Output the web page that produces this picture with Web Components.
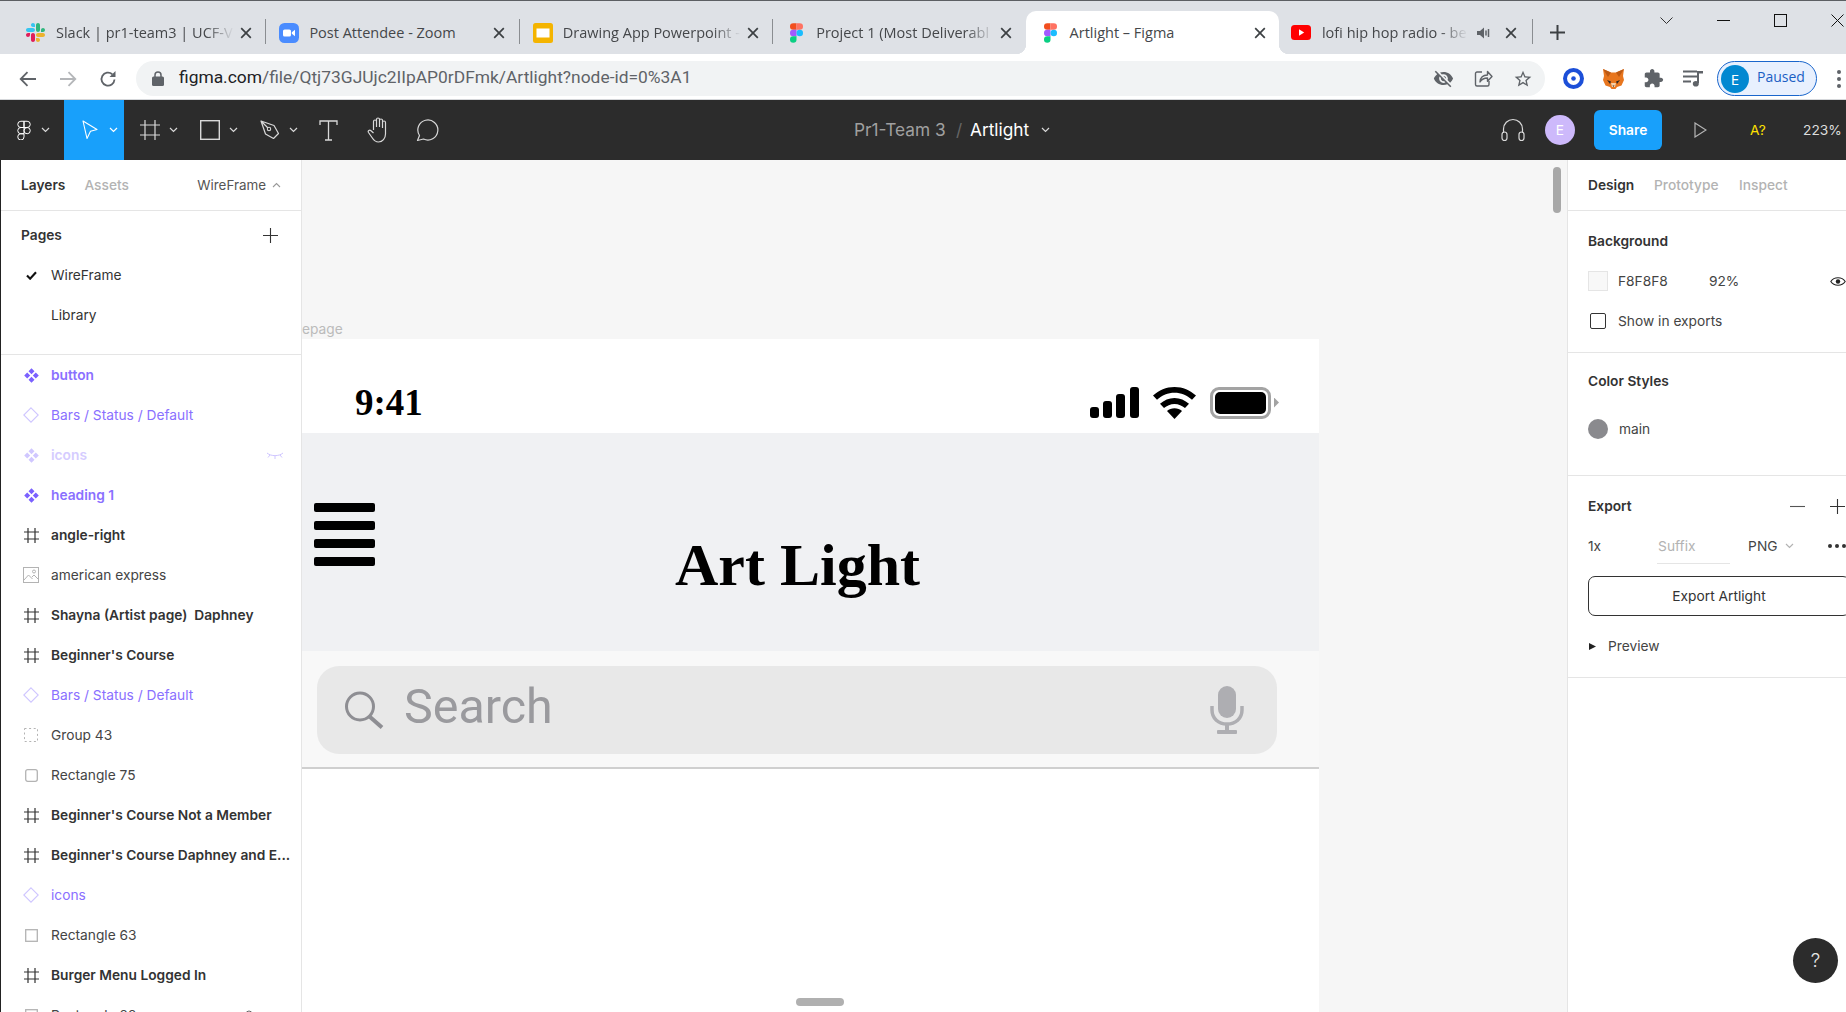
<!DOCTYPE html>
<html>
<head>
<meta charset="utf-8">
<title>Artlight – Figma</title>
<style>
html, body { margin: 0; height: 100%; overflow: hidden; background: #fff; }
body { display: flex; flex-direction: column; width: 1846px; height: 1012px; font-family: Inter, "Liberation Sans", sans-serif; }
.main { display: flex; height: 852px; overflow: hidden; }
</style>
</head>
<body>
<chrome-tabstrip>
    <chrome-tab icon="slack" label="Slack | pr1-team3 | UCF-VI" fade></chrome-tab>
    <chrome-tab icon="zoom" label="Post Attendee - Zoom"></chrome-tab>
    <chrome-tab icon="slides" label="Drawing App Powerpoint -" fade></chrome-tab>
    <chrome-tab icon="figma" label="Project 1 (Most Deliverabl" fade noline></chrome-tab>
    <chrome-tab icon="figma" label="Artlight – Figma" active noline></chrome-tab>
    <chrome-tab icon="youtube" label="lofi hip hop radio - be" fade audio></chrome-tab>
</chrome-tabstrip>
<chrome-toolbar></chrome-toolbar>
<figma-toolbar></figma-toolbar>
<div class="main">
    <layers-panel>
        <layer-row kind="comp" label="button" tone="purple" strong></layer-row>
        <layer-row kind="inst" label="Bars / Status / Default" tone="purple"></layer-row>
        <layer-row kind="comp" label="icons" tone="purple" strong hidden-layer></layer-row>
        <layer-row kind="comp" label="heading 1" tone="purple" strong></layer-row>
        <layer-row kind="frame" label="angle-right" strong></layer-row>
        <layer-row kind="image" label="american express"></layer-row>
        <layer-row kind="frame" label="Shayna (Artist page)&nbsp; Daphney" strong></layer-row>
        <layer-row kind="frame" label="Beginner's Course" strong></layer-row>
        <layer-row kind="inst" label="Bars / Status / Default" tone="purple"></layer-row>
        <layer-row kind="group" label="Group 43"></layer-row>
        <layer-row kind="rrect" label="Rectangle 75"></layer-row>
        <layer-row kind="frame" label="Beginner's Course Not a Member" strong></layer-row>
        <layer-row kind="frame" label="Beginner's Course Daphney and E..." strong></layer-row>
        <layer-row kind="inst" label="icons" tone="purple"></layer-row>
        <layer-row kind="rect" label="Rectangle 63"></layer-row>
        <layer-row kind="frame" label="Burger Menu Logged In" strong></layer-row>
        <layer-row kind="rect" label="Rectangle 22" locked></layer-row>
    </layers-panel>
    <canvas-view>
        <art-frame></art-frame>
    </canvas-view>
    <design-panel></design-panel>
</div>
<script>
const FIGMA_PATHS = 'M6 1H3.5a2.5 2.5 0 000 5H6zM6 1h2.5a2.5 2.5 0 010 5H6zM6 6H3.5a2.5 2.5 0 000 5H6zM6 11H3.5A2.5 2.5 0 106 13.5zM11 8.5a2.5 2.5 0 11-5 0 2.5 2.5 0 015 0z'

/* Every icon of the page, drawn inline */
const ICONS = {
    slack: `<svg width="19" height="19" viewBox="0 0 122.8 122.8"><path fill="#e01e5a" d="M25.8 77.6c0 7.1-5.8 12.9-12.9 12.9S0 84.7 0 77.6s5.8-12.9 12.9-12.9h12.9v12.9zM32.3 77.6c0-7.1 5.8-12.9 12.9-12.9s12.9 5.8 12.9 12.9v32.3c0 7.1-5.8 12.9-12.9 12.9s-12.9-5.8-12.9-12.9V77.6z"/><path fill="#36c5f0" d="M45.2 25.8c-7.1 0-12.9-5.8-12.9-12.9S38.1 0 45.2 0s12.9 5.8 12.9 12.9v12.9H45.2zM45.2 32.3c7.1 0 12.9 5.8 12.9 12.9s-5.8 12.9-12.9 12.9H12.9C5.8 58.1 0 52.3 0 45.2s5.8-12.9 12.9-12.9h32.3z"/><path fill="#2eb67d" d="M97 45.2c0-7.1 5.8-12.9 12.9-12.9s12.9 5.8 12.9 12.9-5.8 12.9-12.9 12.9H97V45.2zM90.5 45.2c0 7.1-5.8 12.9-12.9 12.9s-12.9-5.8-12.9-12.9V12.9C64.7 5.8 70.5 0 77.6 0s12.9 5.8 12.9 12.9v32.3z"/><path fill="#ecb22e" d="M77.6 97c7.1 0 12.9 5.8 12.9 12.9s-5.8 12.9-12.9 12.9-12.9-5.8-12.9-12.9V97h12.9zM77.6 90.5c-7.1 0-12.9-5.8-12.9-12.9s5.8-12.9 12.9-12.9h32.3c7.1 0 12.9 5.8 12.9 12.9s-5.8 12.9-12.9 12.9H77.6z"/></svg>`,
    zoom: `<svg width="20" height="20" viewBox="0 0 20 20"><rect width="20" height="20" rx="5.5" fill="#4a8cff"/><rect x="4" y="6.5" width="8" height="7" rx="1.6" fill="#fff"/><path d="M12.8 9.2l3.2-2.4v6.4l-3.2-2.4z" fill="#fff"/></svg>`,
    slides: `<svg width="20" height="20" viewBox="0 0 20 20"><rect width="20" height="20" rx="2.5" fill="#f4b400"/><rect x="3.5" y="5.5" width="13" height="9" fill="#fff"/></svg>`,
    figma: `<svg width="13" height="20" viewBox="0 0 12 18"><path fill="#f24e1e" d="M0 3a3 3 0 013-3h3v6H3a3 3 0 01-3-3z"/><path fill="#ff7262" d="M6 0h3a3 3 0 010 6H6z"/><path fill="#a259ff" d="M0 9a3 3 0 013-3h3v6H3a3 3 0 01-3-3z"/><circle cx="9" cy="9" r="3" fill="#1abcfe"/><path fill="#0acf83" d="M0 15a3 3 0 013-3h3v3a3 3 0 01-6 0z"/></svg>`,
    youtube: `<svg width="20" height="15" viewBox="0 0 20 15"><rect width="20" height="15" rx="3.5" fill="#f00"/><path d="M8 4.2l5.2 3.3L8 10.8z" fill="#fff"/></svg>`,
    close: `<svg width="12" height="12" viewBox="0 0 12 12"><path d="M1.2 1.2l9.6 9.6M10.8 1.2l-9.6 9.6" stroke="#3c4043" stroke-width="1.7" fill="none"/></svg>`,
    speaker: `<svg width="14" height="12" viewBox="0 0 14 12"><path d="M0 4h3l4-3.5v11L3 8H0z" fill="#5f6368"/><path d="M9 3.5v5M11.5 2v8" stroke="#5f6368" stroke-width="1.5"/></svg>`,
    back: `<svg width="18" height="16" viewBox="0 0 18 16"><path d="M17 8H2M8.5 1.2L1.7 8l6.8 6.8" stroke="#5f6368" stroke-width="1.8" fill="none"/></svg>`,
    forward: `<svg width="18" height="16" viewBox="0 0 18 16"><path d="M1 8h15M9.5 1.2L16.3 8l-6.8 6.8" stroke="#b4b6b9" stroke-width="1.8" fill="none"/></svg>`,
    reload: `<svg width="18" height="18" viewBox="0 0 18 18"><path d="M15.5 9.5A6.5 6.5 0 1113.3 4.2" stroke="#5f6368" stroke-width="1.8" fill="none"/><path d="M16.5 1v6h-6z" fill="#5f6368"/></svg>`,
    lock: `<svg width="12" height="15" viewBox="0 0 12 15"><path d="M3 6V4a3 3 0 016 0v2" stroke="#5f6368" stroke-width="1.5" fill="none"/><rect y="5.5" width="12" height="9.5" rx="1.5" fill="#5f6368"/></svg>`,
    eyeOff: `<svg width="21" height="21" viewBox="0 0 24 24"><path fill="#5f6368" d="M12 7c2.76 0 5 2.24 5 5 0 .65-.13 1.26-.36 1.83l2.92 2.92c1.51-1.26 2.7-2.89 3.43-4.75-1.73-4.39-6-7.5-11-7.5-1.4 0-2.74.25-3.98.7l2.16 2.16C10.74 7.13 11.35 7 12 7zM2 4.27l2.28 2.28.46.46C3.08 8.3 1.78 10.02 1 12c1.73 4.39 6 7.5 11 7.5 1.55 0 3.03-.3 4.38-.84l.42.42L19.73 22 21 20.73 3.27 3 2 4.27zM7.53 9.8l1.55 1.55c-.05.21-.08.43-.08.65 0 1.66 1.34 3 3 3 .22 0 .44-.03.65-.08l1.55 1.55c-.67.33-1.41.53-2.2.53-2.76 0-5-2.24-5-5 0-.79.2-1.53.53-2.2zm4.31-.78l3.15 3.15.02-.16c0-1.66-1.34-3-3-3l-.17.01z"/></svg>`,
    share: `<svg width="19" height="19" viewBox="0 0 19 19"><path d="M8 3H3a1.5 1.5 0 00-1.5 1.5v11A1.5 1.5 0 003 17h10.5a1.5 1.5 0 001.5-1.5V12" stroke="#5f6368" stroke-width="1.4" fill="none"/><path d="M6 13c.4-4.5 3.5-7 7.5-7V2.5L18 7.5l-4.5 4.8V9c-3 0-5.8 1.2-7.5 4z" stroke="#5f6368" stroke-width="1.4" fill="none" stroke-linejoin="round"/></svg>`,
    star: `<svg width="20" height="20" viewBox="0 0 24 24"><path fill="#5f6368" d="M22 9.24l-7.19-.62L12 2 9.19 8.63 2 9.24l5.46 4.73L5.82 21 12 17.27 18.18 21l-1.63-7.03L22 9.24zM12 15.4l-3.76 2.27 1-4.28-3.32-2.88 4.38-.38L12 6.1l1.71 4.04 4.38.38-3.32 2.88 1 4.28L12 15.4z"/></svg>`,
    ring: `<svg width="21" height="21" viewBox="0 0 21 21"><circle cx="10.5" cy="10.5" r="10.5" fill="#1c4fd8"/><circle cx="10.5" cy="10.5" r="6.5" fill="#fff"/><circle cx="10.5" cy="10.5" r="2.3" fill="#1c4fd8"/></svg>`,
    fox: `<svg width="21" height="20" viewBox="0 0 21 20"><path d="M0 0l8 3.5h5L21 0l-1 7 1 4-2.5 5.5L14 18l-1.5 2h-4L7 18l-4.5-1.5L0 11l1-4z" fill="#e8761e"/><path d="M4 11l4 1.5L7 15zM17 11l-4 1.5 1 2.5z" fill="#2f2a26"/><path d="M8 14h5l-1 4H9z" fill="#f6d0a8"/><path d="M9.5 16.5h2L10.5 18z" fill="#2f2a26"/><path d="M0 0l8 3.5L5 8zM21 0l-8 3.5L16 8z" fill="#bd5a14"/></svg>`,
    puzzle: `<svg width="21" height="21" viewBox="0 0 24 24"><path fill="#5f6368" d="M20.5 11H19V7c0-1.1-.9-2-2-2h-4V3.5C13 2.12 11.88 1 10.5 1S8 2.12 8 3.5V5H4c-1.1 0-1.99.9-1.99 2v3.8H3.5c1.49 0 2.7 1.21 2.7 2.7s-1.21 2.7-2.7 2.7H2V20c0 1.1.9 2 2 2h3.8v-1.5c0-1.49 1.21-2.7 2.7-2.7 1.49 0 2.7 1.21 2.7 2.7V22H17c1.1 0 2-.9 2-2v-4h1.5c1.38 0 2.5-1.12 2.5-2.5S21.88 11 20.5 11z"/></svg>`,
    queue: `<svg width="20" height="17" viewBox="0 0 20 17"><path d="M0 1.5h14M0 6.5h14M0 11.5h8" stroke="#5f6368" stroke-width="1.8"/><path d="M15 1v12" stroke="#5f6368" stroke-width="2"/><path d="M15.5 1H20v2.5h-4.5z" fill="#5f6368"/><ellipse cx="12.8" cy="13.8" rx="3" ry="2.8" fill="#5f6368"/></svg>`,
    kebab: `<svg width="4" height="18" viewBox="0 0 4 18"><circle cx="2" cy="2" r="2" fill="#5f6368"/><circle cx="2" cy="9" r="2" fill="#5f6368"/><circle cx="2" cy="16" r="2" fill="#5f6368"/></svg>`,
    figmaMono: `<svg width="16" height="20" viewBox="0 0 12 16"><path d="${FIGMA_PATHS}" stroke="#fff" stroke-width=".8" fill="none"/></svg>`,
    move: `<svg width="16" height="20" viewBox="0 0 16 20"><path d="M1 1l14 8.5-6.5 1.8L5 18.5z" stroke="#fff" stroke-width="1.1" fill="none" stroke-linejoin="round"/></svg>`,
    frame: `<svg width="20" height="20" viewBox="0 0 20 20"><path d="M5 0v20M15 0v20M0 5h20M0 15h20" stroke="#d9d9d9" stroke-width="1.2" fill="none"/></svg>`,
    rect: `<svg width="20" height="20" viewBox="0 0 20 20"><rect x=".7" y=".7" width="18.6" height="18.6" stroke="#d9d9d9" stroke-width="1.4" fill="none"/></svg>`,
    pen: `<svg width="20" height="20" viewBox="0 0 20 20"><path d="M1 1l13 4.5 4.5 8-5 5-8-4.5zM1 1l7 7" stroke="#d9d9d9" stroke-width="1.2" fill="none" stroke-linejoin="round"/><circle cx="9" cy="9" r="1.7" stroke="#d9d9d9" stroke-width="1.1" fill="none"/></svg>`,
    type: `<svg width="19" height="21" viewBox="0 0 19 21"><path d="M1 5V1h17v4M9.5 1v19M6 20h7" stroke="#d9d9d9" stroke-width="1.3" fill="none"/></svg>`,
    hand: `<svg width="23" height="26" viewBox="0 0 23 26"><path d="M6.5 13V4.5a1.5 1.5 0 013 0V10M9.5 10V2.5a1.5 1.5 0 013 0V10M12.5 10V3.5a1.5 1.5 0 013 0V11M15.5 11V5.5a1.5 1.5 0 013 0V17c0 4.5-3 8-7 8-3.5 0-5-2-6.5-4.5L1.5 15.5c-1-1.5 1-3.2 2.5-1.8L6.5 16" stroke="#d9d9d9" stroke-width="1.2" fill="none" stroke-linejoin="round"/></svg>`,
    comment: `<svg width="23" height="23" viewBox="0 0 23 23"><path d="M1.5 21.5l2-5A10 10 0 1 1 7.5 20z" stroke="#d9d9d9" stroke-width="1.2" fill="none" stroke-linejoin="round"/></svg>`,
    headphones: `<svg width="24" height="24" viewBox="0 0 24 24"><path d="M2.5 15v-4a9.5 9.5 0 0119 0v4" stroke="#d9d9d9" stroke-width="1.2" fill="none"/><rect x="1" y="14" width="5" height="8.5" rx="2.5" stroke="#d9d9d9" stroke-width="1.2" fill="none"/><rect x="18" y="14" width="5" height="8.5" rx="2.5" stroke="#d9d9d9" stroke-width="1.2" fill="none"/></svg>`,
    play: `<svg width="13" height="16" viewBox="0 0 13 16"><path d="M1 1l11 7-11 7z" stroke="#b5b5b5" stroke-width="1.2" fill="none"/></svg>`,
    chevron: (c) => `<svg width="9" height="6" viewBox="0 0 9 6"><path d="M1 1l3.5 3.5L8 1" stroke="${c}" stroke-width="1.2" fill="none"/></svg>`,
    comp: (o) => `<svg width="15" height="15" viewBox="0 0 15 15" opacity="${o}"><path fill="#7b61ff" d="M7.5 .2l3 3-3 3-3-3zM3.2 4.5l3 3-3 3-3-3zM11.8 4.5l3 3-3 3-3-3zM7.5 8.8l3 3-3 3-3-3z"/></svg>`,
    inst: `<svg width="16" height="16" viewBox="0 0 16 16"><path d="M8 .8L15.2 8 8 15.2.8 8z" stroke="#cfc6ff" stroke-width="1.1" fill="none"/></svg>`,
    hash: `<svg width="15" height="15" viewBox="0 0 15 15"><path d="M4 0v15M11 0v15M0 4h15M0 11h15" stroke="#333" stroke-width="1.2" fill="none"/></svg>`,
    image: `<svg width="16" height="16" viewBox="0 0 16 16"><rect x=".5" y=".5" width="15" height="15" stroke="#b3b3b3" fill="none"/><path d="M1 13l4.5-5 4 4M9 10l2-2 4 4" stroke="#b3b3b3" fill="none"/><circle cx="11" cy="4.5" r="1.5" stroke="#b3b3b3" fill="none"/></svg>`,
    group: `<svg width="14" height="14" viewBox="0 0 14 14"><rect x=".5" y=".5" width="13" height="13" stroke="#b3b3b3" stroke-dasharray="2 2.6" fill="none"/></svg>`,
    rrect: `<svg width="13" height="13" viewBox="0 0 13 13"><rect x=".7" y=".7" width="11.6" height="11.6" rx="2" stroke="#b3b3b3" stroke-width="1.3" fill="none"/></svg>`,
    square: `<svg width="13" height="13" viewBox="0 0 13 13"><rect x=".7" y=".7" width="11.6" height="11.6" stroke="#b3b3b3" stroke-width="1.3" fill="none"/></svg>`,
    plus: `<svg width="15" height="15" viewBox="0 0 15 15"><path d="M7.5 0v15M0 7.5h15" stroke="#333" stroke-width="1.1" fill="none"/></svg>`,
    minus: `<svg width="15" height="15" viewBox="0 0 15 15"><path d="M0 7.5h15" stroke="#555" stroke-width="1.1" fill="none"/></svg>`,
    check: `<svg width="11" height="9" viewBox="0 0 12 10"><path d="M1 5l3.5 3.5L11 1.5" stroke="#111" stroke-width="2.4" fill="none"/></svg>`,
    closedEye: `<svg width="18" height="9" viewBox="0 0 18 9"><path d="M1 2c4 3.5 12 3.5 16 0M4 4L2 6.5M9 5v3M14 4l2 2.5" stroke="#cfc6ff" stroke-width="1" fill="none"/></svg>`,
    eye: `<svg width="16" height="11" viewBox="0 0 16 11"><path d="M.8 5.5C4 .5 12 .5 15.2 5.5 12 10.5 4 10.5.8 5.5z" stroke="#222" stroke-width="1.1" fill="none"/><circle cx="8" cy="5.5" r="2.2" fill="#222"/></svg>`,
    signal: `<svg width="49" height="31" viewBox="0 0 49 31"><rect x="0" y="20" width="9" height="11" rx="3" /><rect x="13" y="14" width="9" height="17" rx="3" /><rect x="26" y="7" width="9" height="24" rx="3" /><rect x="40" y="0" width="9" height="31" rx="3" /></svg>`,
    wifi: `<svg width="43" height="32" viewBox="0 0 43 32"><path d="M21.5 0C13 0 6 3.3 0 8.5l4 4.3C9 8.3 15 5.7 21.5 5.7S34 8.3 39 12.8l4-4.3C37 3.3 30 0 21.5 0z"/><path d="M21.5 11c-5.5 0-10.5 2.3-14.5 5.8l4 4.3c2.8-2.5 6.5-4.2 10.5-4.2s7.7 1.7 10.5 4.2l4-4.3C32 13.3 27 11 21.5 11z"/><path d="M21.5 32l-7.5-8c2-1.6 4.6-2.7 7.5-2.7s5.5 1.1 7.5 2.7z"/></svg>`,
    search: `<svg width="42" height="38" viewBox="0 0 42 38"><circle cx="16" cy="15.5" r="13.5" stroke="#8e8e93" stroke-width="3" fill="none"/><path d="M25.5 25.5L38 36.5" stroke="#8e8e93" stroke-width="4" fill="none"/></svg>`,
    mic: `<svg width="34" height="48" viewBox="0 0 34 48"><rect x="8" y="0" width="18" height="32" rx="9" fill="#aeaeb2"/><path d="M2 20v4c0 8.5 6.5 14 15 14s15-5.5 15-14v-4" stroke="#aeaeb2" stroke-width="3.5" fill="none"/><path d="M17 38v7" stroke="#aeaeb2" stroke-width="4"/><rect x="7" y="44" width="20" height="4" rx="1" fill="#aeaeb2"/></svg>`,
}

/* Chrome: tabs */
class ChromeTabstrip extends HTMLElement {
    constructor() {
        super()
        this.attachShadow({ mode: 'open' })
        this.shadowRoot.innerHTML = `
        <style>
        :host { display: flex; flex: none; height: 54px; box-sizing: border-box; background: #dee1e6; border-top: 1px solid #5c5f63; padding-left: 12px; align-items: flex-end; overflow: hidden; }
        .plus { width: 50px; height: 43px; display: flex; align-items: center; justify-content: center; color: #3c4043; }
        .controls { margin-left: auto; margin-right: -20px; align-self: flex-start; display: flex; height: 38px; align-items: center; flex: none; }
        .controls div { width: 57px; display: flex; justify-content: center; }
        </style>
        <slot></slot>
        <div class="plus"><svg width="15" height="15" viewBox="0 0 15 15"><path d="M7.5 0v15M0 7.5h15" stroke="#3c4043" stroke-width="2"/></svg></div>
        <div class="controls">
            <div><svg width="13" height="7" viewBox="0 0 13 7"><path d="M.5.5l6 6 6-6" stroke="#333" fill="none"/></svg></div>
            <div><svg width="13" height="1" viewBox="0 0 13 1"><path d="M0 .5h13" stroke="#111"/></svg></div>
            <div><svg width="13" height="13" viewBox="0 0 13 13"><rect x=".5" y=".5" width="12" height="12" stroke="#111" fill="none"/></svg></div>
            <div><svg width="13" height="13" viewBox="0 0 13 13"><path d="M.5.5l12 12M12.5.5l-12 12" stroke="#111" fill="none"/></svg></div>
        </div>`
    }
}
customElements.define('chrome-tabstrip', ChromeTabstrip)

class ChromeTab extends HTMLElement {
    constructor() {
        super()
        this.attachShadow({ mode: 'open' })
        const active = this.hasAttribute('active')
        const fade = this.hasAttribute('fade')
        const audio = this.hasAttribute('audio')
        const textWidth = audio ? 146 : 178
        const icon = this.getAttribute('icon')
        this.shadowRoot.innerHTML = `
        <style>
        :host { display: flex; flex: none; position: relative; width: 253.4px; height: 43px; box-sizing: border-box; align-items: center; font: 14.5px "Open Sans", "Liberation Sans", sans-serif; color: #45474a; ${active ? 'background:#fff;border-radius:10px 10px 0 0;' : ''} }
        ${active ? `
        :host::before, :host::after { content: ''; position: absolute; bottom: 0; width: 10px; height: 10px; }
        :host::before { left: -10px; background: radial-gradient(circle at 0 0, transparent 10px, #fff 10.5px); }
        :host::after { right: -10px; background: radial-gradient(circle at 100% 0, transparent 10px, #fff 10.5px); }` : ''}
        .ico { width: 44px; flex: none; display: flex; padding-left: 14px; box-sizing: border-box; align-items: center; }
        .ico.figma { padding-left: 18px; }
        .ico.youtube { width: 43px; padding-left: 12px; }
        .txt { width: ${textWidth}px; white-space: nowrap; flex: none; ${fade ? `-webkit-mask-image: linear-gradient(90deg,#000 ${textWidth - 28}px,transparent ${textWidth}px);` : ''} }
        .spk { width: 32px; display: flex; justify-content: center; }
        .x { position: absolute; left: ${audio ? 226 : 228}px; top: 16px; display: flex; }
        .sep { position: absolute; right: -1px; top: 8px; width: 1px; height: 25px; background: #8a8d91; }
        </style>
        <div class="ico ${icon}">${ICONS[icon]}</div>
        <div class="txt">${this.getAttribute('label')}</div>
        ${audio ? `<div class="spk">${ICONS.speaker}</div>` : ''}
        <div class="x">${ICONS.close}</div>
        ${this.hasAttribute('noline') ? '' : '<div class="sep"></div>'}`
    }
}
customElements.define('chrome-tab', ChromeTab)

/* Chrome: address bar */
class ChromeToolbar extends HTMLElement {
    constructor() {
        super()
        this.attachShadow({ mode: 'open' })
        this.shadowRoot.innerHTML = `
        <style>
        :host { display: flex; flex: none; height: 46px; box-sizing: border-box; background: #fff; border-bottom: 1px solid #d5d7da; padding: 5px 0 1px 8px; align-items: center; }
        .btn { width: 40px; flex: none; display: flex; justify-content: center; align-items: center; }
        .omni { width: 1409px; height: 35px; margin-left: 8px; box-sizing: border-box; background: #f1f3f4; border-radius: 18px; display: flex; align-items: center; padding-left: 16px; flex: none; }
        .url { margin-left: 15px; padding-bottom: 3px; font: 17.4px Roboto, "Liberation Sans", sans-serif; color: #5f6368; white-space: nowrap; }
        .url b { font-weight: 400; color: #202124; }
        .right { margin-left: auto; display: flex; padding-right: 2px; }
        .pill { width: 100px; height: 35px; margin-left: 4px; box-sizing: border-box; border: 1px solid #1a66cc; border-radius: 18px; background: #e8f0fe; display: flex; align-items: center; flex: none; padding-left: 3px; font: 14px "Open Sans", "Liberation Sans", sans-serif; color: #1a5fc4; }
        .pill i { width: 28px; height: 28px; border-radius: 50%; background: #0288d1; color: #fff; font-style: normal; display: flex; align-items: center; justify-content: center; margin-right: 8px; font-size: 15px; }
        .pill span { padding-bottom: 5px; }
        .kebab { width: 44px; flex: none; display: flex; justify-content: center; margin-left: 0; }
        </style>
        <div class="btn">${ICONS.back}</div>
        <div class="btn">${ICONS.forward}</div>
        <div class="btn">${ICONS.reload}</div>
        <div class="omni">
            ${ICONS.lock}
            <div class="url"><b>figma.com</b>/file/Qtj73GJUjc2IIpAP0rDFmk/Artlight?node-id=0%3A1</div>
            <div class="right">
                <div class="btn">${ICONS.eyeOff}</div>
                <div class="btn">${ICONS.share}</div>
                <div class="btn">${ICONS.star}</div>
            </div>
        </div>
        <div class="btn" style="margin-left:8px">${ICONS.ring}</div>
        <div class="btn">${ICONS.fox}</div>
        <div class="btn">${ICONS.puzzle}</div>
        <div class="btn">${ICONS.queue}</div>
        <div class="pill"><i>E</i><span>Paused</span></div>
        <div class="kebab">${ICONS.kebab}</div>`
    }
}
customElements.define('chrome-toolbar', ChromeToolbar)

/* Figma: top bar */
class ToolButton extends HTMLElement {
    constructor() {
        super()
        this.attachShadow({ mode: 'open' })
        const on = this.hasAttribute('on')
        const menu = this.hasAttribute('menu')
        this.shadowRoot.innerHTML = `
        <style>
        :host { display: flex; flex: none; height: 60px; align-items: center; width: ${this.getAttribute('w') || 60}px; ${on ? 'background:#18a0fb;' : ''} }
        .i { flex: none; width: ${this.getAttribute('iw') || 52}px; display: flex; justify-content: center; }
        .c { display: flex; margin-left: -7px; }
        </style>
        <div class="i">${ICONS[this.getAttribute('icon')]}</div>
        ${menu ? `<div class="c">${ICONS.chevron(on ? '#fff' : '#d9d9d9')}</div>` : ''}`
    }
}
customElements.define('tool-button', ToolButton)

class FigmaToolbar extends HTMLElement {
    constructor() {
        super()
        this.attachShadow({ mode: 'open' })
        this.shadowRoot.innerHTML = `
        <style>
        :host { display: flex; flex: none; height: 60px; background: #2c2c2c; align-items: center; font-family: Inter, "Liberation Sans", sans-serif; color: #fff; }
        .title { margin-left: 402px; display: flex; align-items: center; font-size: 17.3px; white-space: nowrap; padding-bottom: 1px; }
        .team { color: #a0a0a0; width: 92px; }
        .slash { color: #666; width: 24px; padding-left: 10px; box-sizing: border-box; }
        .chev { margin-left: 12px; display: flex; }
        .right { margin-left: auto; display: flex; align-items: center; height: 60px; }
        .hp { display: flex; margin-right: 20px; }
        .av { width: 30px; height: 30px; border-radius: 50%; background: #cdb9fb; display: flex; align-items: center; justify-content: center; font-size: 13.75px; margin-right: 19px; }
        .share { width: 68px; height: 40px; border-radius: 6px; background: #18a0fb; display: flex; align-items: center; justify-content: center; font-size: 13.75px; font-weight: 600; margin-right: 32px; }
        .play { display: flex; margin-right: 43px; }
        .aq { color: #ffe100; font-size: 13.75px; margin-right: 36px; width: 17px; }
        .zoom { color: #ddd; font-size: 13.75px; width: 43px; }
        </style>
        <tool-button icon="figmaMono" w="64" iw="48" menu></tool-button>
        <tool-button icon="move" on menu></tool-button>
        <tool-button icon="frame" menu></tool-button>
        <tool-button icon="rect" menu></tool-button>
        <tool-button icon="pen" menu></tool-button>
        <tool-button icon="type" w="50" iw="48"></tool-button>
        <tool-button icon="hand" w="49" iw="49"></tool-button>
        <tool-button icon="comment" w="49" iw="49"></tool-button>
        <div class="title">
            <span class="team">Pr1-Team 3</span><span class="slash">/</span><span>Artlight</span><span class="chev">${ICONS.chevron('#d9d9d9')}</span>
        </div>
        <div class="right">
            <div class="hp">${ICONS.headphones}</div>
            <div class="av">E</div>
            <div class="share">Share</div>
            <div class="play">${ICONS.play}</div>
            <div class="aq">A?</div>
            <div class="zoom">223%</div>
        </div>`
    }
}
customElements.define('figma-toolbar', FigmaToolbar)

/* Left panel */
class LayerRow extends HTMLElement {
    constructor() {
        super()
        this.attachShadow({ mode: 'open' })
        const kind = this.getAttribute('kind')
        const hiddenLayer = this.hasAttribute('hidden-layer')
        const icon = kind === 'comp' ? ICONS.comp(hiddenLayer ? .35 : 1) : kind === 'frame' ? ICONS.hash : kind === 'rect' ? ICONS.square : ICONS[kind]
        const purple = this.getAttribute('tone') === 'purple'
        this.shadowRoot.innerHTML = `
        <style>
        :host { display: flex; flex: none; height: 40px; align-items: center; padding-left: 20px; font-size: 13.75px; color: ${purple ? (hiddenLayer ? '#d5ccff' : '#8a70ff') : '#444'}; ${this.hasAttribute('strong') ? `font-weight:600;${purple ? '' : 'color:#333;'}` : ''} white-space: nowrap; }
        .i { width: 20px; flex: none; display: flex; justify-content: center; margin-right: 10px; }
        .end { margin-left: auto; margin-right: 17px; display: flex; }
        </style>
        <div class="i">${icon}</div>
        <span>${this.getAttribute('label')}</span>
        ${hiddenLayer ? `<div class="end">${ICONS.closedEye}</div>` : ''}
        ${this.hasAttribute('locked') ? `<div class="end" style="margin-right:47px"><svg width="10" height="10" viewBox="0 0 10 10"><path d="M2 10V4a3 3 0 016 0v6" stroke="#666" fill="none"/></svg></div>` : ''}`
    }
}
customElements.define('layer-row', LayerRow)

class LayersPanel extends HTMLElement {
    constructor() {
        super()
        this.attachShadow({ mode: 'open' })
        this.shadowRoot.innerHTML = `
        <style>
        :host { display: block; flex: none; width: 302px; box-sizing: border-box; background: #fff; border-left: 1px solid #222; border-right: 1px solid #e5e5e5; font: 13.75px Inter, "Liberation Sans", sans-serif; color: #333; overflow: hidden; }
        header { height: 51px; box-sizing: border-box; border-bottom: 1px solid #e5e5e5; display: flex; align-items: center; padding: 0 20px 1px 20px; }
        header b { font-weight: 600; }
        header span { margin-left: 19px; color: #b3b3b3; font-weight: 500; }
        header em { margin-left: auto; font-style: normal; color: #555; margin-right: 6px; font-size: 13.4px; }
        .pages { box-sizing: border-box; height: 144px; border-bottom: 1px solid #e5e5e5; padding: 4px 0 0 20px; }
        .row { height: 40px; display: flex; align-items: center; }
        .row b { font-weight: 600; }
        .row .plus { margin-left: auto; margin-right: 23px; display: flex; }
        .row .ck { width: 20px; margin-right: 10px; display: flex; justify-content: center; }
        </style>
        <header><b>Layers</b><span>Assets</span><em>WireFrame</em><svg width="9" height="6" viewBox="0 0 9 6"><path d="M1 5l3.5-3.5L8 5" stroke="#999" stroke-width="1.1" fill="none"/></svg></header>
        <div class="pages">
            <div class="row"><b>Pages</b><div class="plus">${ICONS.plus}</div></div>
            <div class="row"><div class="ck">${ICONS.check}</div>WireFrame</div>
            <div class="row"><div class="ck"></div>Library</div>
        </div>
        <slot></slot>`
    }
}
customElements.define('layers-panel', LayersPanel)

/* Centre: canvas */
class CanvasView extends HTMLElement {
    constructor() {
        super()
        this.attachShadow({ mode: 'open' })
        this.shadowRoot.innerHTML = `
        <style>
        :host { display: block; flex: none; width: 1265px; position: relative; background: #f6f6f6; overflow: hidden; font-family: Inter, "Liberation Sans", sans-serif; }
        .tag { height: 16px; margin-top: 161px; margin-bottom: 2px; font-size: 13.75px; line-height: 16px; color: #bbb; }
        .scroll { position: absolute; right: 6px; top: 7px; width: 8px; height: 46px; border-radius: 4px; background: #a8a8a8; }
        </style>
        <div class="tag">epage</div>
        <slot></slot>
        <div class="scroll"></div>`
    }
}
customElements.define('canvas-view', CanvasView)

class ArtFrame extends HTMLElement {
    constructor() {
        super()
        this.attachShadow({ mode: 'open' })
        this.shadowRoot.innerHTML = `
        <style>
        :host { display: block; width: 1017px; height: 673px; background: #fff; position: relative; }
        .status { height: 94px; box-sizing: border-box; padding: 33px 40px 0 53px; display: flex; align-items: center; }
        .time { font: 700 37px "Liberation Serif", serif; color: #000; }
        .sig { margin-left: auto; display: flex; align-items: center; }
        .sig svg { display: block; }
        .wifi { margin-left: 14px; }
        .batt { margin-left: 14px; width: 61px; height: 32px; box-sizing: border-box; border: 3px solid #a3a3a3; border-radius: 9px; padding: 2px; }
        .batt div { height: 100%; border-radius: 5px; background: #000; }
        .nub { margin-left: 3px; width: 5px; height: 10px; background: #a3a3a3; clip-path: polygon(0 0, 100% 50%, 0 100%); }
        .head { height: 218px; background: #f0f1f3; display: flex; align-items: flex-start; padding-left: 12px; }
        .burger { margin-top: 70px; width: 61px; display: grid; gap: 9px; flex: none; }
        .burger i { height: 9px; border-radius: 2px; background: #000; }
        .name { margin: 102px 0 0 300px; font: 700 60px/60px "Liberation Serif", serif; color: #000; white-space: nowrap; }
        .band { height: 118px; box-sizing: border-box; background: #f8f8f8; border-bottom: 2px solid #cfcfcf; padding: 15px 42px 0 15px; }
        .box { height: 88px; box-sizing: border-box; border-radius: 22px; background: #e8e8e8; display: flex; align-items: center; padding: 0 33px 0 27px; }
        .box svg { flex: none; }
        .ph { margin: 0 0 7px 18px; font: 400 48.4px Roboto, "Liberation Sans", sans-serif; color: #9a9a9e; }
        .mic { margin-left: auto; display: flex; }
        .home { position: absolute; left: 494px; bottom: 6px; width: 48px; height: 8px; border-radius: 4px; background: #b0b0b0; }
        </style>
        <div class="status">
            <div class="time">9:41</div>
            <div class="sig">${ICONS.signal}<span class="wifi">${ICONS.wifi}</span><div class="batt"><div></div></div><div class="nub"></div></div>
        </div>
        <div class="head">
            <div class="burger"><i></i><i></i><i></i><i></i></div>
            <div class="name">Art Light</div>
        </div>
        <div class="band">
            <div class="box">${ICONS.search}<div class="ph">Search</div><div class="mic">${ICONS.mic}</div></div>
        </div>
        <div class="home"></div>`
    }
}
customElements.define('art-frame', ArtFrame)

/* Right panel */
class DesignPanel extends HTMLElement {
    constructor() {
        super()
        this.attachShadow({ mode: 'open' })
        this.shadowRoot.innerHTML = `
        <style>
        :host { display: block; flex: none; width: 279px; position: relative; box-sizing: border-box; background: #fff; border-left: 1px solid #e5e5e5; font: 13.75px Inter, "Liberation Sans", sans-serif; color: #444; overflow: hidden; }
        header { height: 51px; box-sizing: border-box; border-bottom: 1px solid #e5e5e5; display: flex; align-items: center; padding: 0 0 1px 20px; }
        header b { font-weight: 600; color: #333; width: 66px; }
        header span { color: #b3b3b3; font-weight: 500; width: 85px; }
        section { border-bottom: 1px solid #e5e5e5; padding-left: 20px; }
        .row { height: 40px; display: flex; align-items: center; white-space: nowrap; position: relative; }
        .row b { font-weight: 600; color: #333; }
        .bg { height: 142px; padding-top: 10px; box-sizing: border-box; }
        .cs { height: 123px; padding-top: 8px; box-sizing: border-box; }
        .ex { height: 202px; padding-top: 10px; box-sizing: border-box; }
        .sw { width: 18px; height: 18px; background: #f8f8f8; border: 1px solid #e5e5e5; margin-right: 10px; }
        .pct { margin-left: 41px; }
        .eye { margin-left: auto; margin-right: 0; display: flex; }
        .cb { width: 14px; height: 14px; border: 1px solid #333; border-radius: 2px; margin: 0 12px 0 2px; }
        .dot { width: 20px; height: 20px; border-radius: 50%; background: #8a8a8e; margin-right: 11px; }
        .cs .row { margin-bottom: 8px; }
        .ctl { position: absolute; display: flex; }
        .suffix { margin-left: 56px; width: 73px; height: 35px; line-height: 35px; color: #b3b3b3; border-bottom: 1px solid #e5e5e5; margin-top: 1px; box-sizing: border-box; padding-left: 1px; flex: none; }
        .png { margin-left: 18px; margin-right: 7px; }
        .dots { position: absolute; left: 240px; display: flex; gap: 3px; }
        .dots i { width: 4px; height: 4px; border-radius: 50%; background: #333; }
        .exp { width: 262px; height: 40px; box-sizing: border-box; border: 1px solid #333; border-radius: 7px; display: flex; align-items: center; justify-content: center; margin-top: 10px; color: #333; }
        .pv { margin-top: 10px; }
        .pv svg { margin: 0 12px 0 1px; }
        .help { position: absolute; right: 8px; bottom: 29px; width: 45px; height: 45px; border-radius: 50%; background: #2c2c2c; color: #e5e5e5; display: flex; align-items: center; justify-content: center; font-size: 19px; font-weight: 300; }
        </style>
        <header><b>Design</b><span>Prototype</span><span>Inspect</span></header>
        <section class="bg">
            <div class="row"><b>Background</b></div>
            <div class="row"><div class="sw"></div>F8F8F8<span class="pct">92%</span><span class="eye">${ICONS.eye}</span></div>
            <div class="row"><div class="cb"></div>Show in exports</div>
        </section>
        <section class="cs">
            <div class="row"><b>Color Styles</b></div>
            <div class="row"><div class="dot"></div>main</div>
        </section>
        <section class="ex">
            <div class="row"><b>Export</b><div class="ctl" style="left:202px">${ICONS.minus}</div><div class="ctl" style="left:242px">${ICONS.plus}</div></div>
            <div class="row">1x<div class="suffix">Suffix</div><span class="png">PNG</span>${ICONS.chevron('#b3b3b3')}<div class="dots"><i></i><i></i><i></i></div></div>
            <div class="exp">Export Artlight</div>
            <div class="row pv"><svg width="7" height="7" viewBox="0 0 7 7"><path d="M0 0l7 3.5L0 7z" fill="#222"/></svg>Preview</div>
        </section>
        <div class="help">?</div>`
    }
}
customElements.define('design-panel', DesignPanel)
</script>
</body>
</html>
